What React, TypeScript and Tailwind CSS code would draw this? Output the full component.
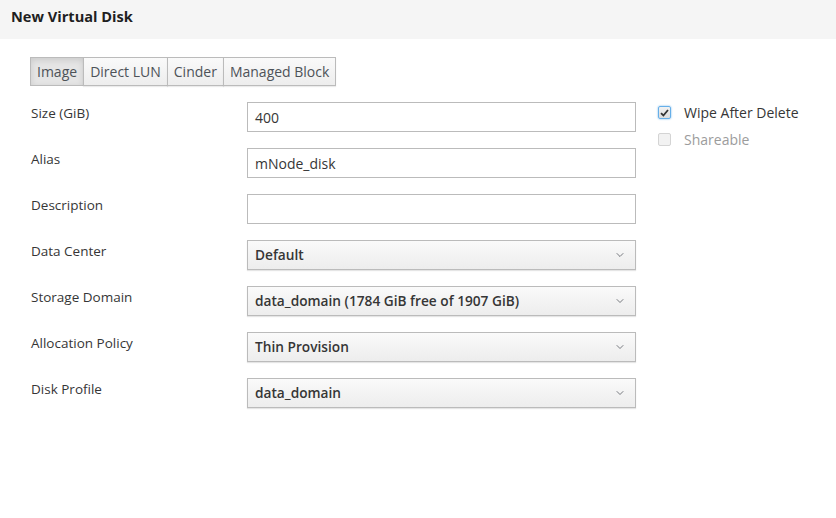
import { ChevronDown } from "lucide-react";

const FIELDS = [
  { label: "Size (GiB)", kind: "input", value: "400" },
  { label: "Alias", kind: "input", value: "mNode_disk" },
  { label: "Description", kind: "input", value: "" },
  { label: "Data Center", kind: "select", value: "Default" },
  { label: "Storage Domain", kind: "select", value: "data_domain (1784 GiB free of 1907 GiB)" },
  { label: "Allocation Policy", kind: "select", value: "Thin Provision" },
  { label: "Disk Profile", kind: "select", value: "data_domain" },
];

const TABS = ["Image", "Direct LUN", "Cinder", "Managed Block"];

export default function App() {
  return (
    <div
      className="w-[836px] h-[518px] bg-white text-[#363636] text-[13px]"
      style={{ fontFamily: '"Open Sans", "Liberation Sans", sans-serif' }}
    >
      <header className="h-[39px] bg-[#f5f5f5] pl-[11px] pt-[6px]">
        <h1 className="text-[14.6px] font-bold text-[#1f1f1f]">New Virtual Disk</h1>
      </header>

      <div className="pl-[30px] pt-[18px]">
        <div className="flex h-[29px] w-fit">
          {TABS.map((t, i) => (
            <button
              key={t}
              className={
                "px-[6px] border border-[#bbb] text-[14px] text-[#4d5258] " +
                (i > 0 ? "-ml-px " : "") +
                (i === 0
                  ? "bg-[#e5e5e5] shadow-[inset_0_2px_6px_rgba(0,0,0,0.12)]"
                  : "bg-gradient-to-b from-[#fafafa] to-[#ededed] shadow-[0_1px_1px_rgba(0,0,0,0.08)]")
              }
            >
              {t}
            </button>
          ))}
        </div>
      </div>

      <div className="flex pt-[16px]">
        <div className="flex flex-col gap-[16px] pl-[31px]">
          {FIELDS.map((f) => (
            <div key={f.label} className="flex">
              <label className="w-[216px] pt-[1px] leading-[20px] text-[13.5px] text-[#363636]">{f.label}</label>
              {f.kind === "input" ? (
                <div className="w-[389px] h-[30px] border border-[#bbb] bg-white px-[7px] flex items-center text-[14px] text-[#363636]">
                  {f.value}
                </div>
              ) : (
                <div className="w-[389px] h-[30px] border border-[#bbb] bg-gradient-to-b from-[#fafafa] to-[#ededed] shadow-[0_1px_1px_rgba(0,0,0,0.1)] pl-[7px] pr-[9px] flex items-center justify-between text-[13.7px] font-semibold text-[#363636]">
                  <span>{f.value}</span>
                  <ChevronDown size={12} strokeWidth={1.5} className="text-[#4d5258]" />
                </div>
              )}
            </div>
          ))}
        </div>

        <div className="flex flex-col gap-[6px] pl-[22px]">
          <div className="flex items-center gap-[13px]">
            <span className="w-[13px] h-[13px] rounded-[2px] border border-[#66afe9] bg-gradient-to-b from-[#f2f2f2] to-[#dcdcdc] shadow-[0_0_2px_#66afe9] flex items-center justify-center">
              <svg width="9" height="8" viewBox="0 0 9 8">
                <path d="M1 4.2 L3.4 6.5 L8 1" fill="none" stroke="#333" strokeWidth="1.8" />
              </svg>
            </span>
            <span className="text-[14px] text-[#363636]">Wipe After Delete</span>
          </div>
          <div className="flex items-center gap-[13px]">
            <span className="w-[13px] h-[13px] rounded-[2px] border border-[#d4d4d4] bg-[#f2f2f2]" />
            <span className="text-[14px] text-[#9c9c9c]">Shareable</span>
          </div>
        </div>
      </div>
    </div>
  );
}
